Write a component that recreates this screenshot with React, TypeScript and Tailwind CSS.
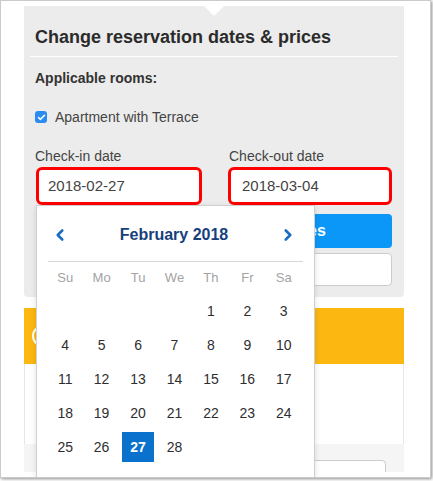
import { Check, ChevronLeft, ChevronRight } from "lucide-react";

const weekDays = ["Su", "Mo", "Tu", "We", "Th", "Fr", "Sa"];

// February 2018 starts on a Thursday
const buildWeeks = () => {
  const cells: (number | null)[] = [null, null, null, null];
  for (let d = 1; d <= 28; d++) cells.push(d);
  while (cells.length % 7 !== 0) cells.push(null);
  const weeks: (number | null)[][] = [];
  for (let i = 0; i < cells.length; i += 7) weeks.push(cells.slice(i, i + 7));
  return weeks;
};

const DatePicker = () => {
  const weeks = buildWeeks();
  const selected = 27;

  return (
    <div className="absolute left-[35px] top-[204px] w-[279px] h-[300px] bg-white border border-[#cfcfcf] shadow-[0_2px_6px_rgba(0,0,0,0.12)] pt-[12px]">
      <div className="px-[11px]">
        <div className="flex items-center justify-between h-[34px]">
          <button className="w-[24px] h-[24px] flex items-center justify-center text-[#1a6dc2]">
            <ChevronLeft size={18} strokeWidth={3.5} />
          </button>
          <span className="text-[16px] font-bold text-[#173f7d]">February 2018</span>
          <button className="w-[24px] h-[24px] mr-[3px] flex items-center justify-center text-[#1a6dc2]">
            <ChevronRight size={18} strokeWidth={3.5} />
          </button>
        </div>
        <div className="mt-[9px] border-t border-[#d6d6d6]" />
      </div>
      <div className="pl-[10px] pr-[12px]">
        <div className="grid grid-cols-7 h-[32px] items-center">
          {weekDays.map((d) => (
            <span key={d} className="text-center text-[13px] text-[#a3a3a3]">
              {d}
            </span>
          ))}
        </div>
        {weeks.map((week, i) => (
          <div key={i} className="grid grid-cols-7 h-[34px]">
            {week.map((day, j) => (
              <div key={j} className="flex items-center justify-center">
                {day !== null && (
                  <span
                    className={
                      day === selected
                        ? "w-[32px] h-[30px] flex items-center justify-center bg-[#0a72cc] text-white font-bold text-[14px]"
                        : "w-[32px] h-[30px] flex items-center justify-center text-[#2e2e2e] text-[14px]"
                    }
                  >
                    {day}
                  </span>
                )}
              </div>
            ))}
          </div>
        ))}
      </div>
    </div>
  );
};

const App = () => {
  return (
    <div
      className="w-[433px] h-[481px] bg-white"
      style={{ fontFamily: '"Liberation Sans", Arial, sans-serif' }}
    >
      <div className="relative w-[431px] h-[478px] bg-white border border-[#cbcbcb] shadow-[1px_1px_3px_rgba(0,0,0,0.45)] overflow-hidden">
        <div className="h-[471px] overflow-hidden pt-[5px] pl-[23px]">
          {/* reservation panel */}
          <div className="relative w-[380px] bg-[#ececec] rounded-b-[4px] pb-[11px]">
            <div className="absolute left-[180px] top-0 w-0 h-0 border-l-[10px] border-r-[10px] border-t-[10px] border-l-transparent border-r-transparent border-t-white" />
            <div className="px-[6px] pt-[19px]">
              <h2 className="pl-[5px] text-[18px] leading-[24px] font-bold text-[#2b2b2b]">
                Change reservation dates &amp; prices
              </h2>
              <div className="mt-[7px] border-t border-white" />
            </div>
            <div className="px-[12px]">
              <p className="mt-[11px] -ml-[1px] text-[14px] leading-[20px] font-bold text-[#333]">
                Applicable rooms:
              </p>
              <label className="mt-[19px] -ml-[1px] flex items-center h-[20px] gap-[8px] text-[14px] text-[#444]">
                <span className="w-[12px] h-[12px] rounded-[3px] bg-[#2a8cf0] flex items-center justify-center text-white">
                  <Check size={9} strokeWidth={4} />
                </span>
                Apartment with Terrace
              </label>
              <div className="mt-[19px] grid grid-cols-[166px_164px] gap-x-[26px]">
                <span className="-ml-[1px] text-[14px] leading-[20px] text-[#444]">Check-in date</span>
                <span className="ml-[1px] text-[14px] leading-[20px] text-[#444]">Check-out date</span>
                <div className="mt-[1px] h-[38px] rounded-[6px] border-[3px] border-[#ff0000] bg-white flex items-center pl-[9px] text-[15px] text-[#444]">
                  2018-02-27
                </div>
                <div className="mt-[1px] h-[38px] rounded-[6px] border-[3px] border-[#ff0000] bg-white flex items-center pl-[11px] text-[15px] text-[#444]">
                  2018-03-04
                </div>
              </div>
              <button className="mt-[9px] w-full h-[34px] rounded-[4px] bg-[#0a97f7] text-white text-[16px] font-bold pl-[28px]">
                Change reservation dates
              </button>
              <div className="mt-[5px] h-[33px] rounded-[4px] border border-[#cccccc] bg-white" />
            </div>
          </div>

          {/* next section, behind the picker */}
          <div className="mt-[11px] w-[380px] h-[56px] bg-[#fcb811] flex items-center pl-[8px]">
            <span className="w-[22px] h-[22px] rounded-full border-2 border-white" />
          </div>
          <div className="w-[380px] h-[80px] bg-white border-x border-[#e6e6e6]" />
          <div className="w-[380px] h-[40px] bg-[#f5f5f5] pt-[16px] pr-[18px] pl-[40px]">
            <div className="h-[30px] rounded-[4px] border border-[#cccccc] bg-white" />
          </div>
        </div>
        <DatePicker />
      </div>
    </div>
  );
};

export default App;
